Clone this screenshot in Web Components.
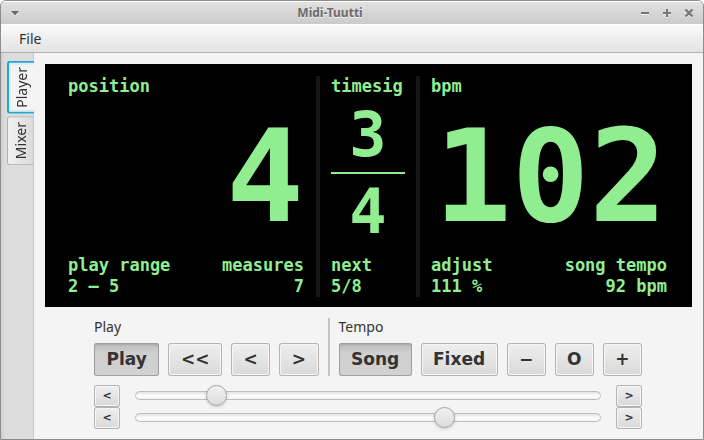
<!DOCTYPE html>
<html lang="en">
<head>
<meta charset="utf-8">
<title>Midi-Tuutti</title>
<style>
html, body { margin: 0; height: 100%; }
body { background: #fff; font-family: "Noto Sans", sans-serif; font-size: 14px; color: #333; }
</style>
</head>
<body>
<app-window heading="Midi-Tuutti">
  <menu-bar slot="menu"></menu-bar>
  <side-tabs slot="tabs"></side-tabs>
  <song-display></song-display>
  <transport-controls></transport-controls>
</app-window>

<script>
class BaseElement extends HTMLElement {
  constructor() {
    super();
    this.attachShadow({ mode: "open" });
  }
  connectedCallback() {
    this.shadowRoot.innerHTML = this.render();
  }
}

customElements.define("app-window", class extends BaseElement {
  render() {
    return `
<style>
:host { display: flex; flex-direction: column; box-sizing: border-box; min-height: 100vh;
  border: 1px solid #8c8c8c; border-radius: 6px 6px 0 0; overflow: hidden; background: #f4f4f4; }
header { display: flex; justify-content: space-between; align-items: center; height: 23px;
  box-sizing: border-box; padding: 0 8px; border-top: 1px solid #fff;
  background: linear-gradient(#e1e1e1, #cbcbcb); }
h1 { margin: 0; font-size: 12px; line-height: 20px; font-weight: bold; color: #6b6b6b; text-shadow: 0 1px #f0f0f0; }
button { all: unset; display: grid; place-items: center; width: 12px; height: 12px; }
svg { display: block; filter: drop-shadow(0 1px #efefef); }
.tools { display: flex; gap: 10px; }
main { display: flex; flex: 1; }
.content { flex: 1; min-width: 0; padding: 11px 11px 10px; }
</style>
<header>
  <button aria-label="Window menu"><svg width="10" height="6" viewBox="0 0 10 6"><path d="M1 1h8L5 5.500z" fill="#6b6b6b"/></svg></button>
  <h1>${this.getAttribute("heading")}</h1>
  <div class="tools">
    <button aria-label="Minimize"><svg width="10" height="10"><path d="M1 4h8v2H1z" fill="#777"/></svg></button>
    <button aria-label="Maximize"><svg width="10" height="10"><path d="M1 4h3V1h2v3h3v2H6v3H4V6H1z" fill="#777"/></svg></button>
    <button aria-label="Close"><svg width="10" height="10"><path d="M1.500 1.500l7 7M8.500 1.500l-7 7" stroke="#777" stroke-width="2.400"/></svg></button>
  </div>
</header>
<slot name="menu"></slot>
<main><slot name="tabs"></slot><div class="content"><slot></slot></div></main>`;
  }
});

customElements.define("menu-bar", class extends BaseElement {
  render() {
    return `
<style>
:host { display: block; border-top: 1px solid #fff; border-bottom: 1px solid #b0b0b0;
  background: linear-gradient(#fafafa, #e3e3e3); }
nav { display: flex; padding: 0 10px; }
button { all: unset; padding: 0 8px; line-height: 27px; }
</style>
<nav><button aria-haspopup="menu">File</button></nav>`;
  }
});

customElements.define("side-tabs", class extends BaseElement {
  render() {
    return `
<style>
:host { display: block; box-sizing: border-box; width: 33px; padding: 8px 0 0 6px;
  border-right: 1px solid #c8c8c8; background: linear-gradient(90deg, #d0d0d0, #dcdcdc 4px); }
div { display: flex; flex-direction: column; gap: 2px; margin-right: -1px; }
button { all: unset; box-sizing: border-box; writing-mode: vertical-rl; transform: rotate(180deg);
  line-height: 25px; padding: 5px 0; text-align: center;
  border: 1px solid #b2b2b2; border-left: 1px solid #c8c8c8; border-radius: 0 3px 3px 0;
  background: linear-gradient(90deg, #dadada, #f2f2f2); }
button[aria-selected="true"] { border: 2px solid #21a5d1; border-left: 0; padding: 4px 0;
  background: #f4f4f4; box-shadow: inset -2px 0 #d9ecf3, inset 0 2px #d9ecf3, inset 0 -2px #d9ecf3; }
</style>
<div role="tablist" aria-orientation="vertical">
  <button role="tab" aria-selected="true">Player</button>
  <button role="tab" aria-selected="false">Mixer</button>
</div>`;
  }
});

customElements.define("song-display", class extends BaseElement {
  render() {
    return `
<style>
:host { display: grid; grid-template-columns: 1fr 4px minmax(74px, auto) 4px 1fr; gap: 11px; padding: 12px 24px 10px 23px;
  background: #000; color: #90ee90; font: bold 17px/21px "DejaVu Sans Mono", monospace; }
.rule { background: #161616; }
section { display: flex; flex-direction: column; }
.big { flex: 1; font-size: 129px; line-height: 158px; text-align: right; }
.big, .pair { padding-right: 1px; }
.pair { display: flex; justify-content: space-between; }
.pair div:last-child { text-align: right; }
.sig { display: flex; flex-direction: column; flex: 1; text-align: center; font-size: 62px; line-height: 75px; }
.sig span:first-child { border-bottom: 2px solid #90ee90; }
</style>
<section><div>position</div><div class="big">4</div>
  <div class="pair"><div>play range<br>2 – 5</div><div>measures<br>7</div></div></section>
<div class="rule"></div>
<section><div>timesig</div><div class="sig"><span>3</span><span>4</span></div><div>next<br>5/8</div></section>
<div class="rule"></div>
<section><div>bpm</div><div class="big">102</div>
  <div class="pair"><div>adjust<br>111 %</div><div>song tempo<br>92 bpm</div></div></section>`;
  }
});

customElements.define("push-button", class extends BaseElement {
  render() {
    const pressed = this.hasAttribute("pressed") ? 'aria-pressed="true"' : "";
    const name = this.hasAttribute("name") ? `aria-label="${this.getAttribute("name")}"` : "";
    return `
<style>
:host { display: flex; flex: 1 1 auto; font: bold 17px/33px "DejaVu Sans", sans-serif; }
:host([small]) { flex: none; width: 26px; font-size: 11px; line-height: 22px; }
button { all: unset; flex: 1; box-sizing: border-box; padding: 0 12px; text-align: center; border-radius: 3px; color: #333;
  background: linear-gradient(#efefef, #d9d9d9); box-shadow: inset 0 0 0 1px #b4b4b4, inset 0 0 0 2px #f6f6f6; }
:host([small]) button { padding: 0; }
button[aria-pressed="true"] { background: linear-gradient(#bcbcbc, #cfcfcf 10px, #d2d2d2);
  box-shadow: inset 0 0 0 1px #a0a0a0, inset 0 2px 2px #a8a8a8; }
</style>
<button ${pressed} ${name}><slot></slot></button>`;
  }
});

customElements.define("value-slider", class extends BaseElement {
  render() {
    return `
<style>
:host { display: flex; align-items: center; gap: 15px; height: 22px; }
input { appearance: none; -webkit-appearance: none; flex: 1; min-width: 0; height: 21px; margin: 0 0 1px; background: none; }
input::-webkit-slider-runnable-track { height: 9px; border-radius: 5px; box-sizing: border-box; border: 1px solid #bebebe;
  background: linear-gradient(#e2e2e2, #fff 4px, #f0f0f0); }
input::-webkit-slider-thumb { -webkit-appearance: none; box-sizing: border-box; width: 21px; height: 21px; margin-top: -7px;
  border: 1px solid #a4a4a4; border-radius: 50%; background: linear-gradient(#f2f2f2, #dcdcdc);
  box-shadow: 0 1px 3px #00000030; }
</style>
<push-button small name="Decrease ${this.getAttribute("label")}">&lt;</push-button>
<input type="range" min="0" max="1000" value="${this.getAttribute("value")}" aria-label="${this.getAttribute("label")}">
<push-button small name="Increase ${this.getAttribute("label")}">&gt;</push-button>`;
  }
});

customElements.define("control-group", class extends BaseElement {
  render() {
    return `
<style>
:host { display: flex; flex: 1 1 auto; flex-direction: column; gap: 8px; }
.row { display: flex; gap: 9px; }
.title { line-height: 17px; }
</style>
<div class="title" id="t">${this.getAttribute("label")}</div>
<div class="row" role="group" aria-labelledby="t"><slot></slot></div>`;
  }
});

customElements.define("transport-controls", class extends BaseElement {
  render() {
    return `
<style>
:host { display: block; margin: 11px 50px 0 49px; }
.groups { display: flex; gap: 9px; margin-bottom: 9px; }
.rule { width: 2px; background: #c4c4c4; }
</style>
<div class="groups">
  <control-group label="Play">
    <push-button pressed>Play</push-button><push-button>&lt;&lt;</push-button><push-button>&lt;</push-button><push-button>&gt;</push-button>
  </control-group>
  <div class="rule"></div>
  <control-group label="Tempo">
    <push-button pressed>Song</push-button><push-button>Fixed</push-button><push-button>−</push-button><push-button>O</push-button><push-button>+</push-button>
  </control-group>
</div>
<value-slider label="range start" value="159"></value-slider>
<value-slider label="range end" value="673"></value-slider>`;
  }
});
</script>
</body>
</html>
